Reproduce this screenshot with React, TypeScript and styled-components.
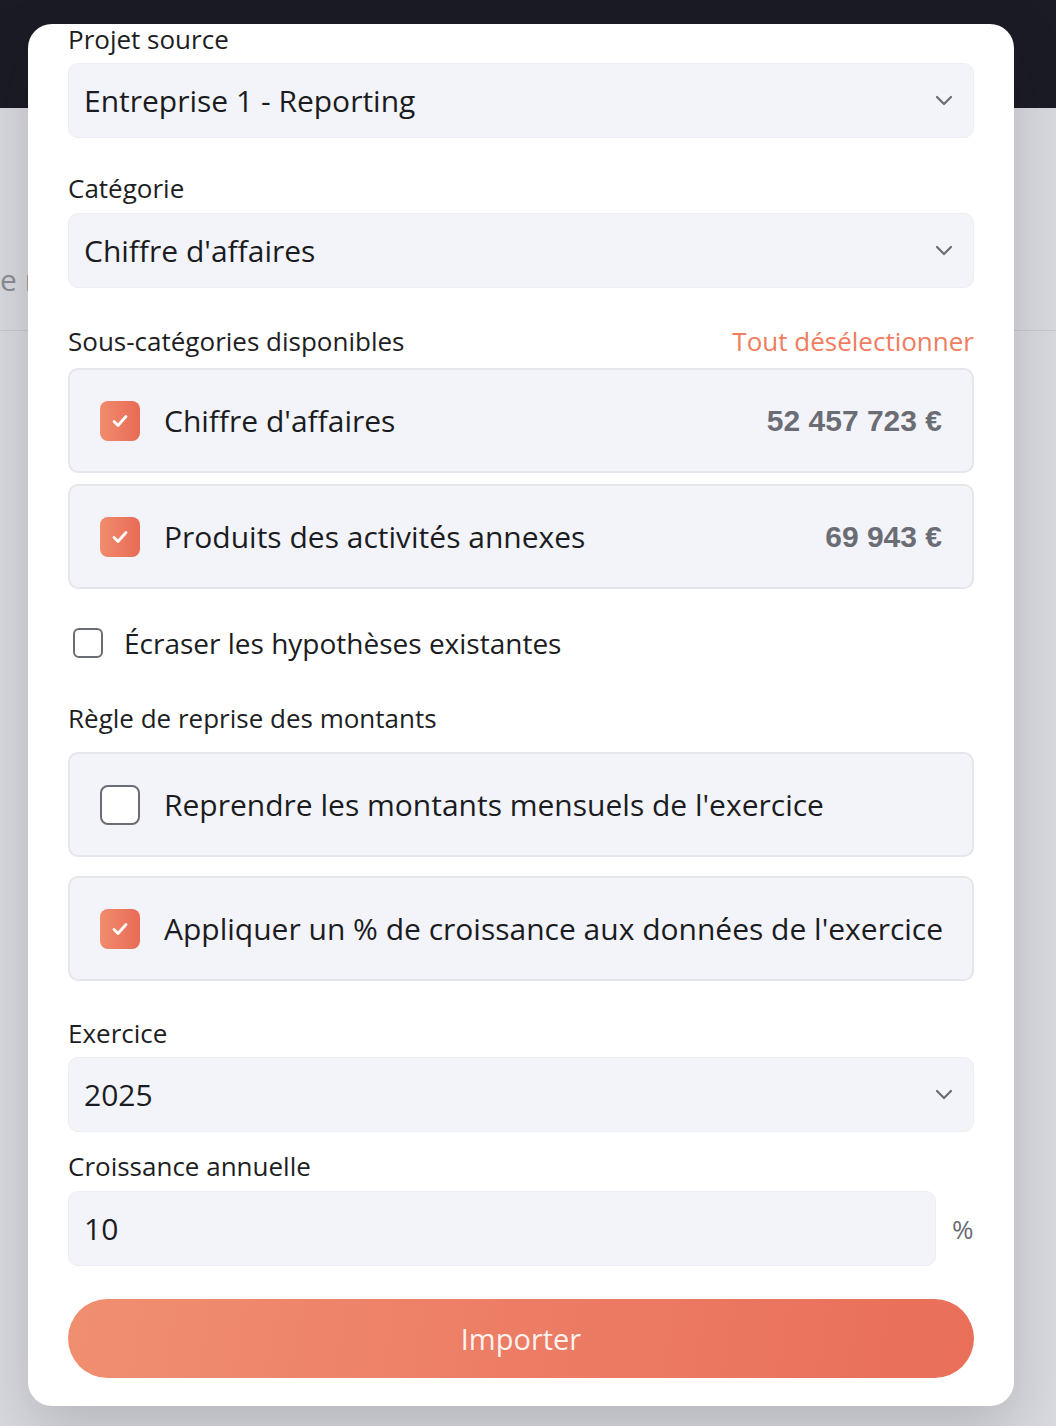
import React from 'react';
import styled, { createGlobalStyle } from 'styled-components';

const GlobalStyle = createGlobalStyle`
    html, body {
        margin: 0;
        padding: 0;
        background: #d9dadf;
        font-family: 'Open Sans', 'Noto Sans', sans-serif;
        overflow: hidden;
    }
    * { box-sizing: border-box; }
`;

const Page = styled.div`
    width: 1056px;
    height: 1426px;
    position: relative;
    background: #d9dadf;
    overflow: hidden;
`;

const TopBar = styled.div`
    height: 108px;
    background: #1a1b25;
`;

const BackRow = styled.div`
    height: 223px;
    display: flex;
    align-items: flex-end;
    padding-bottom: 30px;
    border-bottom: 1px solid #c8c9cf;
    color: #8c8d93;
    font-size: 30px;
    white-space: nowrap;
`;

const Modal = styled.div`
    position: absolute;
    top: 24px;
    left: 28px;
    width: 986px;
    height: 1382px;
    background: #ffffff;
    border-radius: 24px;
    padding: 0 40px 28px;
    box-shadow: 0 24px 60px rgba(20, 22, 35, 0.18);
    display: flex;
    flex-direction: column;
`;

const Label = styled.div<{ top?: number }>`
    margin-top: ${p => p.top ?? 0}px;
    height: 30px;
    line-height: 30px;
    font-size: 26px;
    color: #1d1e23;
`;

const LabelRow = styled.div<{ top?: number }>`
    margin-top: ${p => p.top ?? 0}px;
    display: flex;
    justify-content: space-between;
    align-items: center;
    height: 30px;
`;

const LinkText = styled.span`
    font-size: 26px;
    color: #ef7d5e;
`;

const Select = styled.div<{ top?: number }>`
    margin-top: ${p => p.top ?? 0}px;
    height: 75px;
    background: #f3f4f9;
    border: 1px solid #eceef3;
    border-radius: 10px;
    display: flex;
    align-items: center;
    justify-content: space-between;
    padding: 0 20px 0 15px;
    font-size: 30px;
    color: #1b1c21;
`;

const Card = styled.div<{ top?: number }>`
    margin-top: ${p => p.top ?? 0}px;
    height: 105px;
    background: #f3f4f9;
    border: 2px solid #e4e6ec;
    border-radius: 10px;
    display: flex;
    align-items: center;
    padding: 0 30px;
    gap: 24px;
    font-size: 30px;
    color: #1b1c21;
`;

const CardText = styled.span`
    flex: 1;
    white-space: nowrap;
`;

const Amount = styled.span`
    font-family: 'Liberation Sans', Arial, sans-serif;
    font-weight: 700;
    font-size: 30px;
    color: #6b6d75;
`;

const Box = styled.div<{ checked?: boolean; size: number }>`
    width: ${p => p.size}px;
    height: ${p => p.size}px;
    flex: none;
    border-radius: ${p => (p.size > 34 ? 8 : 6)}px;
    display: flex;
    align-items: center;
    justify-content: center;
    background: ${p => (p.checked ? 'linear-gradient(90deg, #f18c6d, #e96b55)' : '#ffffff')};
    border: ${p => (p.checked ? 'none' : '2px solid #6b6d75')};
`;

const CheckRow = styled.div<{ top?: number }>`
    margin-top: ${p => p.top ?? 0}px;
    display: flex;
    align-items: center;
    gap: 21px;
    padding-left: 5px;
    height: 30px;
    font-size: 28px;
    color: #1b1c21;
`;

const InputRow = styled.div<{ top?: number }>`
    margin-top: ${p => p.top ?? 0}px;
    display: flex;
    align-items: center;
    gap: 16px;
`;

const Input = styled(Select)`
    flex: 1;
`;

const Unit = styled.span`
    font-size: 26px;
    color: #6b6d75;
    width: 22px;
`;

const Button = styled.button<{ top?: number }>`
    margin-top: ${p => p.top ?? 0}px;
    height: 79px;
    width: 100%;
    border: none;
    border-radius: 40px;
    background: linear-gradient(100deg, #f08f70 0%, #ec7b63 55%, #e96f59 100%);
    color: rgba(255, 255, 255, 0.92);
    font-family: 'Open Sans', sans-serif;
    font-size: 29px;
    cursor: pointer;
`;

const Chevron = () => (
    <svg width="18" height="11" viewBox="0 0 18 11" fill="none">
        <path d="M2 2l7 7 7-7" stroke="#6b6d75" strokeWidth="2.2" strokeLinecap="round" strokeLinejoin="round" />
    </svg>
);

const Check = () => (
    <svg width="18" height="14" viewBox="0 0 18 14" fill="none">
        <path d="M3 7.5l4 4 8-9" stroke="#ffffff" strokeWidth="2.8" strokeLinecap="round" strokeLinejoin="round" />
    </svg>
);

const CheckBox: React.FC<{ checked?: boolean; size?: number }> = ({ checked, size = 40 }) => (
    <Box checked={checked} size={size}>{checked && <Check />}</Box>
);

export default function App() {
    return (
        <Page>
            <GlobalStyle />
            <TopBar />
            <BackRow>e r</BackRow>
            <Modal>
                <Label top={0}>Projet source</Label>
                <Select top={9}>
                    <span>Entreprise 1 - Reporting</span>
                    <Chevron />
                </Select>

                <Label top={35}>Catégorie</Label>
                <Select top={10}>
                    <span>Chiffre d'affaires</span>
                    <Chevron />
                </Select>

                <LabelRow top={38}>
                    <Label>Sous-catégories disponibles</Label>
                    <LinkText>Tout désélectionner</LinkText>
                </LabelRow>
                <Card top={12}>
                    <CheckBox checked />
                    <CardText>Chiffre d'affaires</CardText>
                    <Amount>52 457 723 €</Amount>
                </Card>
                <Card top={11}>
                    <CheckBox checked />
                    <CardText>Produits des activités annexes</CardText>
                    <Amount>69 943 €</Amount>
                </Card>

                <CheckRow top={39}>
                    <CheckBox size={30} />
                    <span>Écraser les hypothèses existantes</span>
                </CheckRow>

                <Label top={45}>Règle de reprise des montants</Label>
                <Card top={19}>
                    <CheckBox />
                    <CardText>Reprendre les montants mensuels de l'exercice</CardText>
                </Card>
                <Card top={19}>
                    <CheckBox checked />
                    <CardText>Appliquer un % de croissance aux données de l'exercice</CardText>
                </Card>

                <Label top={37}>Exercice</Label>
                <Select top={9}>
                    <span>2025</span>
                    <Chevron />
                </Select>

                <Label top={19}>Croissance annuelle</Label>
                <InputRow top={10}>
                    <Input>10</Input>
                    <Unit>%</Unit>
                </InputRow>

                <Button top={33}>Importer</Button>
            </Modal>
        </Page>
    );
}
